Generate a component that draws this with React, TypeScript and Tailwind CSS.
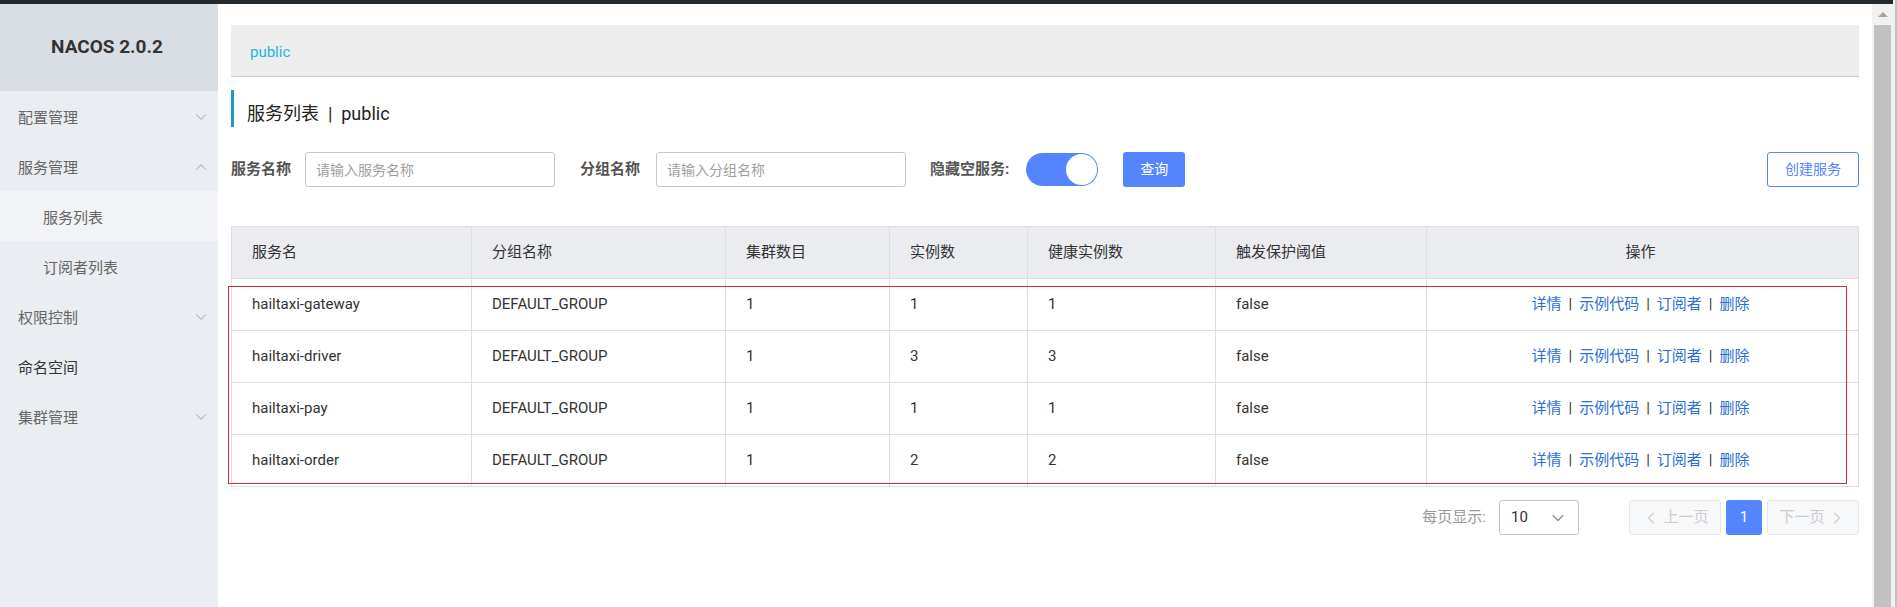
import { ChevronDown, ChevronUp, ChevronLeft, ChevronRight } from 'lucide-react'

interface Service {
  name: string
  group: string
  clusters: number
  instances: number
  healthy: number
  threshold: string
}

const services: Service[] = [
  { name: 'hailtaxi-gateway', group: 'DEFAULT_GROUP', clusters: 1, instances: 1, healthy: 1, threshold: 'false' },
  { name: 'hailtaxi-driver', group: 'DEFAULT_GROUP', clusters: 1, instances: 3, healthy: 3, threshold: 'false' },
  { name: 'hailtaxi-pay', group: 'DEFAULT_GROUP', clusters: 1, instances: 1, healthy: 1, threshold: 'false' },
  { name: 'hailtaxi-order', group: 'DEFAULT_GROUP', clusters: 1, instances: 2, healthy: 2, threshold: 'false' }
]

const columns = ['服务名', '分组名称', '集群数目', '实例数', '健康实例数', '触发保护阈值']

function MenuItem({ label, open, noArrow, dark }: { label: string; open?: boolean; noArrow?: boolean; dark?: boolean }) {
  return (
    <div className="h-[50px] flex items-center justify-between pl-[18px] pr-[8px] pt-[5px]">
      <span className={`text-[15px] ${dark ? 'text-[#333]' : 'text-[#666]'}`}>{label}</span>
      {!noArrow && (open
        ? <ChevronUp size={18} strokeWidth={1.2} className="text-[#999] -mt-[4px]" />
        : <ChevronDown size={18} strokeWidth={1.2} className="text-[#999] -mt-[4px]" />)}
    </div>
  )
}

function SubItem({ label, active }: { label: string; active?: boolean }) {
  return (
    <div className={`h-[50px] flex items-center pl-[43px] pt-[4px] text-[15px] text-[#666] ${active ? 'bg-[#f2f3f7]' : ''}`}>
      {label}
    </div>
  )
}

function Sidebar() {
  return (
    <aside className="w-[218px] shrink-0 bg-[#eaedf1]">
      <div className="h-[87px] bg-[#d9dde4] flex items-center justify-center pr-[4px] text-[19px] font-bold text-[#333]">
        NACOS 2.0.2
      </div>
      <MenuItem label="配置管理" />
      <MenuItem label="服务管理" open />
      <SubItem label="服务列表" active />
      <SubItem label="订阅者列表" />
      <MenuItem label="权限控制" />
      <MenuItem label="命名空间" noArrow dark />
      <MenuItem label="集群管理" />
    </aside>
  )
}

function SearchBar() {
  return (
    <div className="mt-[25px] h-[35px] flex items-center text-[15px]">
      <span className="font-bold text-[#555]">服务名称</span>
      <input
        className="ml-[14px] w-[250px] h-[35px] border border-[#c4c6cf] rounded-[3px] px-[10px] text-[14px] placeholder:text-[#a0a0a0] outline-none"
        placeholder="请输入服务名称"
      />
      <span className="ml-[25px] font-bold text-[#555]">分组名称</span>
      <input
        className="ml-[16px] w-[250px] h-[35px] border border-[#c4c6cf] rounded-[3px] px-[10px] text-[14px] placeholder:text-[#a0a0a0] outline-none"
        placeholder="请输入分组名称"
      />
      <span className="ml-[24px] font-bold text-[#555]">隐藏空服务:</span>
      <div className="ml-[17px] w-[72px] h-[33px] rounded-full bg-[#5584ff] flex items-center justify-end pr-[1px]">
        <div className="w-[31px] h-[31px] rounded-full bg-white" />
      </div>
      <button className="ml-[25px] w-[62px] h-[35px] rounded-[3px] bg-[#5584ff] text-white text-[14px]">查询</button>
      <button className="ml-auto w-[92px] h-[35px] rounded-[3px] border border-[#5584ff] bg-white text-[#5584ff] text-[14px]">
        创建服务
      </button>
    </div>
  )
}

function ServiceTable() {
  const grid = 'grid grid-cols-[240px_254px_164px_138px_188px_211px_432px]'
  const base = 'h-[52px] flex items-center border-r border-b border-[#dcdee3]'
  const cell = `${base} pl-[20px]`
  const center = `${base} justify-center pr-[4px]`
  return (
    <div className="relative mt-[39px] border-t border-l border-[#dcdee3] text-[15px] text-[#333]">
      <div className={`${grid} bg-[#ebecf0]`}>
        {columns.map(col => (
          <div key={col} className={cell}>{col}</div>
        ))}
        <div className={center}>操作</div>
      </div>
      {services.map(s => (
        <div key={s.name} className={grid}>
          <div className={cell}>{s.name}</div>
          <div className={cell}>{s.group}</div>
          <div className={cell}>{s.clusters}</div>
          <div className={cell}>{s.instances}</div>
          <div className={cell}>{s.healthy}</div>
          <div className={cell}>{s.threshold}</div>
          <div className={center}>
            <span className="text-[#2a6fd6]">详情</span>
            <span className="mx-[7px] text-[#333]">|</span>
            <span className="text-[#2a6fd6]">示例代码</span>
            <span className="mx-[7px] text-[#333]">|</span>
            <span className="text-[#2a6fd6]">订阅者</span>
            <span className="mx-[7px] text-[#333]">|</span>
            <span className="text-[#2a6fd6]">删除</span>
          </div>
        </div>
      ))}
      {/* annotation box drawn over the rows */}
      <div className="absolute left-[-4px] top-[59px] w-[1619px] h-[198px] border border-[#dc2a2f] pointer-events-none" />
    </div>
  )
}

function Pagination() {
  return (
    <div className="mt-[13px] h-[35px] flex items-center justify-end text-[15px]">
      <span className="text-[#999]">每页显示:</span>
      <div className="ml-[13px] w-[80px] h-[35px] border border-[#c4c6cf] rounded-[3px] flex items-center justify-between pl-[11px] pr-[10px]">
        <span className="text-[#333]">10</span>
        <ChevronDown size={20} strokeWidth={1.3} className="text-[#888]" />
      </div>
      <div className="ml-[50px] w-[92px] h-[35px] rounded-[3px] border border-[#e6e7eb] bg-[#f7f8fa] flex items-center justify-center text-[#ccc]">
        <ChevronLeft size={20} strokeWidth={1.3} />
        <span className="ml-[2px]">上一页</span>
      </div>
      <div className="ml-[5px] w-[36px] h-[35px] rounded-[3px] bg-[#5584ff] text-white flex items-center justify-center">1</div>
      <div className="ml-[5px] w-[92px] h-[35px] rounded-[3px] border border-[#e6e7eb] bg-[#f7f8fa] flex items-center justify-center text-[#ccc]">
        <span className="mr-[2px]">下一页</span>
        <ChevronRight size={20} strokeWidth={1.3} />
      </div>
    </div>
  )
}

export default function App() {
  return (
    <div className="flex w-[1897px] h-[607px] overflow-hidden bg-white font-['Roboto','Noto_Sans_CJK_SC',sans-serif]">
      <div className="flex-1 flex flex-col">
        <div className="h-[4px] bg-[#24292e]" />
        <div className="flex-1 flex">
          <Sidebar />
          <main className="flex-1 px-[13px] pt-[21px]">
            <div className="h-[52px] bg-[#ededed] border-b border-[#cccccc] pl-[19px] pt-[4px] flex items-center text-[15px] text-[#26b5dd]">
              public
            </div>
            <div className="mt-[13px] h-[37px] border-l-[3px] border-[#1a99cc] pl-[13px] pt-[10px] flex items-center text-[18px] text-[#222]">
              服务列表&nbsp;&nbsp;|&nbsp;&nbsp;public
            </div>
            <SearchBar />
            <ServiceTable />
            <Pagination />
          </main>
          <div className="w-[21px] bg-[#f1f1f1] flex flex-col items-center">
            <div className="h-[21px] flex items-center justify-center">
              <div className="w-0 h-0 border-l-[5px] border-r-[5px] border-b-[5px] border-l-transparent border-r-transparent border-b-[#a3a3a3]" />
            </div>
            <div className="flex-1 w-[17px] bg-[#c1c1c1]" />
          </div>
        </div>
      </div>
      <div className="w-[2px] bg-[#f0f0f0]" />
      <div className="w-[3px] bg-[#c1c1c1]" />
    </div>
  )
}
